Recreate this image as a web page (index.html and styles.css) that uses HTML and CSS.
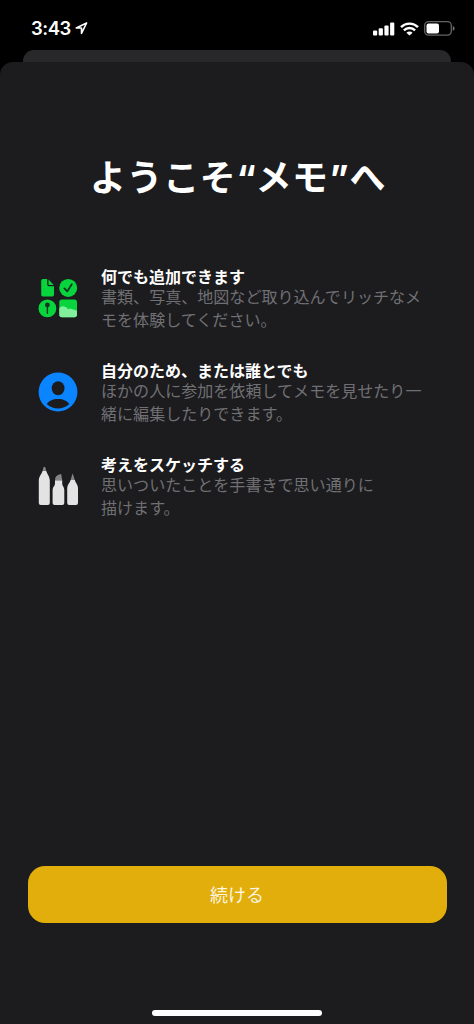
FILE: index.html
```html
<!DOCTYPE html>
<html lang="ja">
<head>
<meta charset="utf-8">
<title>メモ</title>
<link rel="stylesheet" href="styles.css">
</head>
<body>
<div class="phone">
  <header class="status">
    <div class="status-left">
      <span class="time">3:43</span>
      <svg class="location" width="13" height="13" viewBox="0 0 13 13"><path d="M11.6 1 1.2 6H6.5V11.4Z" fill="none" stroke="#fff" stroke-width="1.6" stroke-linejoin="round"/></svg>
    </div>
    <div class="status-right">
      <svg width="22" height="14" viewBox="0 0 22 14" fill="#fff"><rect x="0" y="8.5" width="4.2" height="5" rx="1"/><rect x="5.7" y="6.3" width="4.2" height="7.2" rx="1"/><rect x="11.4" y="3.5" width="4.2" height="10" rx="1"/><rect x="17.1" y="0.5" width="4.2" height="13" rx="1"/></svg>
      <svg width="19" height="14" viewBox="0 0 19 14"><g fill="none" stroke="#fff" stroke-width="2.4"><path d="M1 5.1A12.2 12.2 0 0 1 18 5.1"/><path d="M3.9 8.3A8 8 0 0 1 15.1 8.3"/></g><path d="M9.5 13.6 6.4 10.7A4.4 4.4 0 0 1 12.6 10.7Z" fill="#fff"/></svg>
      <svg width="31" height="15" viewBox="0 0 31 15"><rect x=".7" y=".7" width="26.6" height="13.4" rx="3.8" fill="none" stroke="#656565" stroke-width="1.3"/><rect x="2.5" y="2.4" width="12.5" height="10" rx="2" fill="#fff"/><path d="M28.8 5.1Q30.6 5.8 30.6 7.4T28.8 9.7Z" fill="#777"/></svg>
    </div>
  </header>
  <div class="back-sheet"></div>
  <main class="sheet">
    <h1>ようこそ<span class="quote">“</span>メモ<span class="quote close">”</span>へ</h1>
    <section class="features">
      <article class="feature">
        <svg class="icon" width="40" height="40" viewBox="0 0 40 40">
          <path d="M5 1.1H9.2V6.6Q9.2 8.3 10.9 8.3H16V16.8Q16 18.6 14.2 18.6H5Q3.2 18.6 3.2 16.8V2.9Q3.2 1.1 5 1.1Z" fill="#08d43d"/>
          <path d="M10.5 1.6 15.7 6.9H11.4Q10.5 6.9 10.5 6Z" fill="#08d43d"/>
          <circle cx="30.2" cy="9.9" r="9" fill="#08d43d"/>
          <path d="M26.4 10.4 29.2 13.4 33.8 6.3" fill="none" stroke="#16351e" stroke-width="1.8" stroke-linecap="round" stroke-linejoin="round"/>
          <circle cx="9.4" cy="30.4" r="8.9" fill="#08d43d"/>
          <circle cx="9.4" cy="27" r="2.4" fill="#16351e"/><path d="M9.4 28V35.2" stroke="#16351e" stroke-width="1.4" stroke-linecap="round"/>
          <rect x="21.3" y="21.6" width="17.7" height="17.6" rx="2.6" fill="#08d43d"/>
          <path d="M21.3 30.2Q23 27.5 26.2 28.4 28.8 28.8 30.3 31.4 32 29.5 34 31.2 35.5 31 39 32.8V36.6Q39 39.2 36.4 39.2H23.9Q21.3 39.2 21.3 36.6Z" fill="#82ef9d"/>
        </svg>
        <div><h2>何でも追加できます</h2><p>書類、写真、地図など取り込んでリッチなメ<br>モを体験してください。</p></div>
      </article>
      <article class="feature">
        <svg class="icon" width="40" height="40" viewBox="0 0 40 40"><circle cx="20" cy="20" r="19.4" fill="#0a84ff"/><ellipse cx="20.1" cy="16.3" rx="6.4" ry="7" fill="#1c1c1e"/><path d="M8.7 32C10.6 29 14.8 27 20 27S29.4 29 31.3 32A16.6 16.6 0 0 1 8.7 32Z" fill="#1c1c1e"/></svg>
        <div><h2>自分のため、または誰とでも</h2><p>ほかの人に参加を依頼してメモを見せたり一<br>緒に編集したりできます。</p></div>
      </article>
      <article class="feature">
        <svg class="icon" width="40" height="40" viewBox="0 0 40 40">
          <g fill="#e3e3e3"><path d="M4.6 4.8H8.2C9 8 11.8 10.5 11.8 14.5V37Q11.8 39 9.8 39H2.8Q.8 39 .8 37V14.5C.8 10.5 3.8 8 4.6 4.8Z"/><path d="M17 14.2H24.2V17.5C24.2 20 26.3 21 26.3 24V37Q26.3 39 24.3 39H16.6Q14.6 39 14.6 37V24C14.6 21 17 20 17 17.5Z"/><path d="M32.6 14H36.8C37.4 16.6 40 18.8 40 22V37Q40 39 38 39H31.2Q29.2 39 29.2 37V22C29.2 18.8 32 16.6 32.6 14Z"/></g>
          <path d="M4.7 4.8 5.2 2Q6.4-.6 7.6 2L8.1 4.8ZM17.2 14.2V12Q18.7 8.6 23.2 8L24.2 14.2ZM32.6 14 34.6 7.3 36.8 14Z" fill="#858587"/>
        </svg>
        <div><h2>考えをスケッチする</h2><p>思いついたことを手書きで思い通りに<br>描けます。</p></div>
      </article>
    </section>
    <button class="continue" type="button">続ける</button>
    <div class="home-bar"></div>
  </main>
</div>
</body>
</html>
```
FILE: styles.css
```css
* { box-sizing: border-box; }
body { margin: 0; background: #000; color: #fff; font-family: "Noto Sans CJK JP", sans-serif; }
.phone { width: 474px; height: 1024px; overflow: hidden; display: flex; flex-direction: column; background: #000; }
.status { height: 50px; padding: 18px 19px 0 31px; display: flex; justify-content: space-between; align-items: flex-start; }
.status-left { display: flex; align-items: center; gap: 4px; height: 21px; }
.time { font: 600 18.5px/21px Inter, sans-serif; letter-spacing: -.5px; }
.status-right { display: flex; align-items: center; gap: 5px; height: 21px; }
.back-sheet { height: 12px; margin: 0 23px; border-radius: 11px 11px 0 0; background: #28282b; }
.sheet { flex: 1; display: flex; flex-direction: column; background: #1c1c1e; border-radius: 13px 13px 0 0; }
h1 { margin: 86px 0 0; padding-left: 90px; height: 54px; font-size: 36px; line-height: 54px; font-weight: 600; letter-spacing: .6px; white-space: nowrap; }
.quote { display: inline-block; width: 19px; font-family: Inter, sans-serif; font-weight: 700; letter-spacing: 0; }
.quote.close { width: 21px; text-align: center; }
.features { padding: 62px 0 0 38px; display: grid; row-gap: 25px; }
.feature { display: flex; gap: 23px; height: 69px; }
.icon { flex: none; margin-top: 14px; }
h2 { margin: 0; height: 21px; font-size: 16px; line-height: 25px; font-weight: 700; white-space: nowrap; }
p { margin: 0; color: #707074; font-size: 16.06px; line-height: 23px; font-weight: 400; white-space: nowrap; }
.continue { width: 419px; height: 57px; margin: auto 0 0 27.5px; padding: 0; border: 0; border-radius: 17px; background: #e1ae0b; color: #fcf5e0; font: 400 18px/57px "Noto Sans CJK JP", sans-serif; }
.home-bar { width: 170px; height: 6px; margin: 87px auto 8px; border-radius: 3px; background: #fff; }
```
